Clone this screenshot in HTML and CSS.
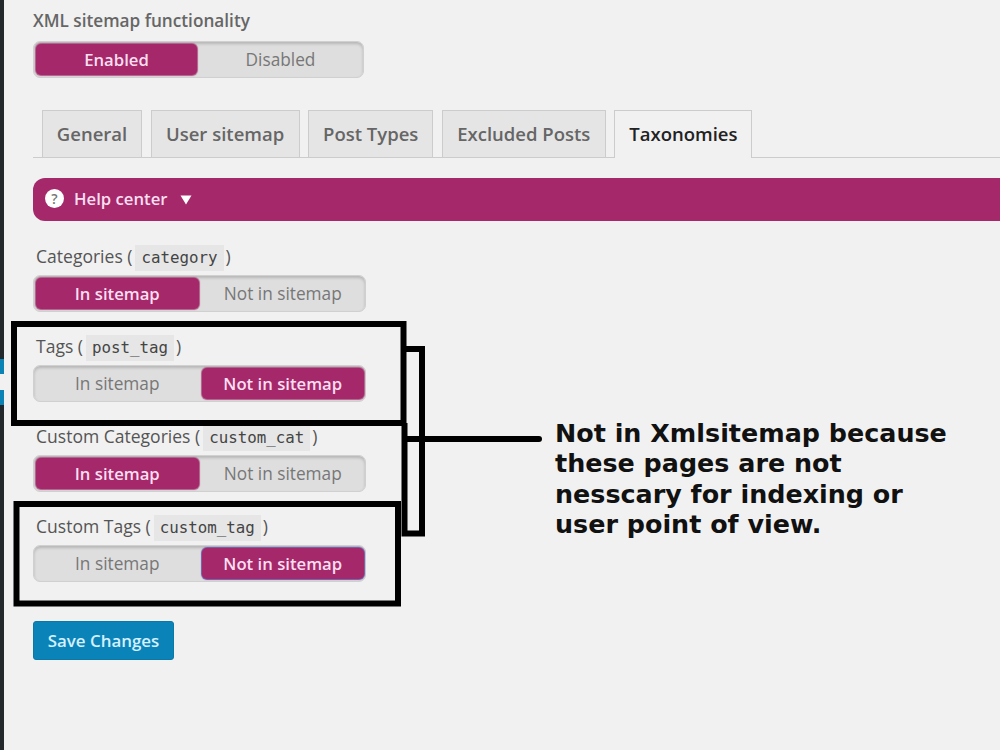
FILE: index.html
```html
<!DOCTYPE html>
<html lang="en">

<head>
    <meta charset="UTF-8">
    <meta name="viewport" content="width=device-width, initial-scale=1.0">
    <title>XML Sitemaps</title>
    <link rel="stylesheet" href="styles.css">
</head>

<body>
    <div class="admin-menu">
        <span class="menu-current"></span>
    </div>

    <main class="content">
        <form class="settings">
            <div class="field-title">XML sitemap functionality</div>
            <div class="switch switch-main">
                <button type="button" class="option active">Enabled</button>
                <button type="button" class="option">Disabled</button>
            </div>

            <nav class="tabs">
                <a class="tab tab-general">General</a>
                <a class="tab tab-user">User sitemap</a>
                <a class="tab tab-types">Post Types</a>
                <a class="tab tab-excluded">Excluded Posts</a>
                <a class="tab tab-taxonomies current">Taxonomies</a>
            </nav>

            <div class="help-center">
                <span class="help-icon">?</span>
                <span class="help-text">Help center</span>
                <svg class="help-arrow" width="12" height="10" viewBox="0 0 12 10">
                    <path d="M0.5 0.5h11L6 9.5z" fill="#fff" />
                </svg>
            </div>

            <div class="field">
                <div class="label">Categories (<code>category</code>)</div>
                <div class="switch">
                    <button type="button" class="option active">In sitemap</button>
                    <button type="button" class="option">Not in sitemap</button>
                </div>
            </div>
            <div class="field">
                <div class="label">Tags (<code>post_tag</code>)</div>
                <div class="switch">
                    <button type="button" class="option">In sitemap</button>
                    <button type="button" class="option active">Not in sitemap</button>
                </div>
            </div>
            <div class="field">
                <div class="label">Custom Categories (<code>custom_cat</code>)</div>
                <div class="switch">
                    <button type="button" class="option active">In sitemap</button>
                    <button type="button" class="option">Not in sitemap</button>
                </div>
            </div>
            <div class="field">
                <div class="label">Custom Tags (<code>custom_tag</code>)</div>
                <div class="switch">
                    <button type="button" class="option">In sitemap</button>
                    <button type="button" class="option active focused">Not in sitemap</button>
                </div>
            </div>

            <button type="button" class="save">Save Changes</button>
        </form>
    </main>

    <!-- Callout drawn over the page -->
    <svg class="callout-lines" width="1000" height="750" viewBox="0 0 1000 750" fill="none" stroke="#000" stroke-width="6">
        <rect x="14" y="324" width="389.5" height="99" />
        <rect x="16.5" y="504" width="381.5" height="99.5" />
        <path d="M404.5 349H422V533.5H404.5V423" />
        <path d="M407 439H539" stroke-linecap="round" />
    </svg>
    <p class="callout-text">Not in Xmlsitemap because<br>these pages are not<br>nesscary for indexing or<br>user point of view.</p>
</body>

</html>
```

FILE: styles.css
```css
* {
    box-sizing: border-box;
}

body {
    display: flex;
    height: 750px;
    margin: 0;
    overflow: hidden;
    background-color: #f1f1f1;
    font-family: "Open Sans", sans-serif;
    color: #555;
}

.admin-menu {
    display: flex;
    flex-direction: column;
    width: 4px;
    padding-top: 359px;
    background-color: #23282d;
}

.menu-current {
    height: 46px;
    border: solid #0c83b5;
    border-width: 15px 0;
    background-color: #f1f1f1;
}

.content {
    flex: 1;
    padding-left: 29px;
}

.field-title {
    height: 41px;
    line-height: 42px;
    font-size: 17.2px;
    font-weight: 600;
    color: #666;
}

.switch {
    display: flex;
    gap: 3px;
    width: 333px;
    height: 37px;
    padding: 2px 1px 2px 2px;
    border: 1px solid #d0d0d0;
    border-radius: 7px;
    background-color: #dedede;
    box-shadow: inset 0 2px 3px rgba(0, 0, 0, 0.18);
}

.switch-main {
    width: 331px;
    padding-right: 2px;
}

.option {
    flex: 1 1 0;
    padding: 1px 0 0;
    border: none;
    border-radius: 5px;
    background: none;
    font-family: inherit;
    font-size: 17.25px;
    line-height: 30px;
    white-space: nowrap;
    color: #777;
}

.option.active {
    background-color: #a4286a;
    box-shadow: 0 0 1px 1px #b05a88;
    font-size: 16.7px;
    font-weight: 600;
    color: #fcdff0;
}

.option.focused {
    box-shadow: 0 0 1px 1px #6f55a8;
}

.tabs {
    display: flex;
    gap: 8.6px;
    height: 48px;
    margin-top: 32px;
    padding-left: 9px;
    border-bottom: 1px solid #ccc;
}

.tab {
    height: 47px;
    border: 1px solid #ccc;
    border-bottom: none;
    background-color: #e5e5e5;
    font-size: 18.5px;
    font-weight: 600;
    line-height: 45px;
    text-align: center;
    white-space: nowrap;
    color: #666;
}

.tab-general {
    width: 100px;
}

.tab-user {
    width: 149px;
}

.tab-types {
    width: 125px;
}

.tab-excluded {
    width: 164px;
}

.tab-taxonomies {
    width: 138px;
}

.tab.current {
    height: 48px;
    background-color: #f1f1f1;
    color: #222;
}

.help-center {
    display: flex;
    align-items: center;
    height: 43px;
    margin-top: 20px;
    padding: 0 0 2px 12px;
    border-radius: 12px 0 0 12px;
    background-color: #a4286a;
    font-size: 16.7px;
    font-weight: 600;
    color: #fcdff0;
}

.help-icon {
    width: 19px;
    height: 19px;
    border-radius: 50%;
    background-color: #fff;
    font-size: 14px;
    line-height: 19px;
    text-align: center;
    color: #777;
}

.help-text {
    margin-left: 10px;
}

.help-arrow {
    margin: 3px 0 0 13px;
}

.field {
    height: 90px;
}

.help-center + .field {
    margin-top: 17px;
}

.label {
    height: 37px;
    padding-left: 3px;
    font-size: 17.55px;
    line-height: 37px;
    white-space: nowrap;
}

code {
    margin: 0 2px 0 3px;
    padding: 3px 6px 4px;
    background-color: #e6e6e6;
    font-family: "DejaVu Sans Mono", monospace;
    font-size: 15.8px;
    color: #444;
}

.save {
    width: 141px;
    height: 39px;
    margin-top: 23px;
    padding: 0;
    border: 1px solid #0b78a8;
    border-radius: 3px;
    background-color: #0a84b8;
    font-family: inherit;
    font-size: 16.9px;
    font-weight: 600;
    color: #d5f0ff;
}

.callout-lines {
    position: absolute;
    top: 0;
    left: 0;
}

.callout-text {
    position: absolute;
    top: 418px;
    left: 555px;
    margin: 0;
    font-family: "DejaVu Sans", sans-serif;
    font-size: 25.4px;
    font-weight: bold;
    line-height: 30.4px;
    white-space: nowrap;
    color: #111;
}
```
